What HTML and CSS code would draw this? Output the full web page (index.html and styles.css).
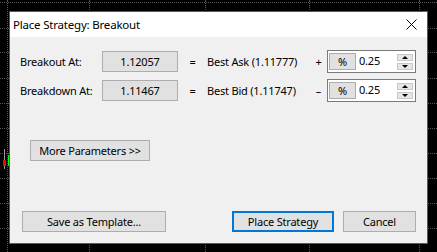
FILE: index.html
```html
<!DOCTYPE html>
<html lang="en">
<head>
    <meta charset="UTF-8">
    <meta name="viewport" content="width=device-width, initial-scale=1.0">
    <title>Place Strategy: Breakout</title>
    <link rel="stylesheet" href="styles.css">
</head>
<body>
    <!-- chart behind the dialog -->
    <div class="chart">
        <div class="hline" style="top:2px"></div>
        <div class="hline" style="top:28px"></div>
        <div class="hline" style="top:52px"></div>
        <div class="hline" style="top:78px"></div>
        <div class="hline" style="top:103px"></div>
        <div class="hline" style="top:128px"></div>
        <div class="hline" style="top:153px"></div>
        <div class="hline" style="top:178px"></div>
        <div class="hline" style="top:203px"></div>
        <div class="hline" style="top:228px"></div>
        <div class="vline" style="left:7px"></div>
        <div class="vline" style="left:89px"></div>
        <div class="vline" style="left:205px"></div>
        <div class="vline" style="left:309px"></div>
        <div class="vline" style="left:419px"></div>
        <div class="wick"></div>
        <div class="candle-red"></div>
        <div class="candle-green"></div>
    </div>

    <div class="dialog">
        <div class="titlebar">
            <span class="title">Place Strategy: Breakout</span>
            <svg class="close" width="11" height="11" viewBox="0 0 11 11">
                <path d="M0.5 0.5 L10.5 10.5 M10.5 0.5 L0.5 10.5" stroke="#000" stroke-width="1"/>
            </svg>
        </div>
        <div class="content">
            <div class="rows">
                <span class="label">Breakout At:</span>
                <span class="value">1.12057</span>
                <span class="eq">=</span>
                <span class="best">Best Ask (1.11777)</span>
                <span class="sign">+</span>
                <div class="spin">
                    <span class="pct">%</span>
                    <span class="num">0.25</span>
                    <div class="arrows">
                        <span class="arrow"><i class="up"></i></span>
                        <span class="arrow"><i class="down"></i></span>
                    </div>
                </div>

                <span class="label">Breakdown At:</span>
                <span class="value">1.11467</span>
                <span class="eq">=</span>
                <span class="best">Best Bid (1.11747)</span>
                <span class="sign">&ndash;</span>
                <div class="spin">
                    <span class="pct">%</span>
                    <span class="num">0.25</span>
                    <div class="arrows">
                        <span class="arrow"><i class="up"></i></span>
                        <span class="arrow"><i class="down"></i></span>
                    </div>
                </div>
            </div>

            <button class="btn more">More Parameters &gt;&gt;</button>

            <div class="footer">
                <button class="btn save">Save as Template...</button>
                <button class="btn place">Place Strategy</button>
                <button class="btn cancel">Cancel</button>
            </div>
        </div>
    </div>
</body>
</html>
```

FILE: styles.css
```css
body{
    margin: 0;
    width: 437px;
    height: 252px;
    background-color: #000;
    font-family: "Noto Sans", "Liberation Sans", sans-serif;
    font-size: 11px;
    letter-spacing: -0.2px;
    color: #000;
    position: relative;
    overflow: hidden;
}

/* chart */
.chart{
    position: absolute;
    left: 0;
    top: 0;
    width: 437px;
    height: 252px;
}
.hline{
    position: absolute;
    left: 0;
    width: 437px;
    border-top: 1px dotted #555;
}
.vline{
    position: absolute;
    top: 0;
    height: 252px;
    border-left: 1px dotted #555;
}
.wick{
    position: absolute;
    left: 4px;
    top: 149px;
    width: 1px;
    height: 20px;
    background-color: #9a9a9a;
}
.candle-red{
    position: absolute;
    left: 3px;
    top: 160px;
    width: 3px;
    height: 6px;
    background-color: #f00;
}
.candle-green{
    position: absolute;
    left: 8px;
    top: 155px;
    width: 1px;
    height: 11px;
    background-color: #0f0;
}

/* dialog */
.dialog{
    position: relative;
    margin: 11px 0 0 9px;
    width: 417px;
    height: 231px;
    border: 1px solid #5a5a5a;
    background-color: #f0f0f0;
    display: flex;
    flex-direction: column;
}
.titlebar{
    height: 25px;
    background-color: #fff;
    display: flex;
    align-items: center;
    justify-content: space-between;
    padding: 0 10px 0 3px;
}
.title{
    font-size: 11.5px;
}
.close{
    display: block;
}

.content{
    flex: 1;
    display: flex;
    flex-direction: column;
    align-items: flex-start;
    padding: 13px 11px 11px 10px;
}
.rows{
    display: grid;
    grid-template-columns: 82px 76px 29px 105px 15px 89px;
    grid-auto-rows: 23px;
    row-gap: 6px;
    align-items: center;
}
.value{
    height: 19px;
    line-height: 19px;
    background-color: #e1e1e1;
    border: 1px solid #adadad;
    text-align: center;
}
.eq{
    text-align: center;
}
.sign{
    text-align: center;
    padding-right: 2px;
}
.spin{
    height: 21px;
    border: 1px solid #7a7a7a;
    background-color: #fff;
    display: flex;
    align-items: center;
    padding: 0 2px 0 1px;
}
.pct{
    width: 25px;
    height: 15px;
    line-height: 15px;
    text-align: center;
    background-color: #e1e1e1;
    border: 1px solid #adadad;
}
.num{
    margin-left: 3px;
    margin-top: -3px;
    flex: 1;
}
.arrows{
    display: flex;
    flex-direction: column;
    gap: 2px;
}
.arrow{
    width: 14px;
    height: 5px;
    border: 1px solid #c8c8c8;
    background-color: #e6e6e6;
    display: flex;
    align-items: center;
    justify-content: center;
}
.up{
    border-left: 3px solid transparent;
    border-right: 3px solid transparent;
    border-bottom: 3px solid #000;
}
.down{
    border-left: 3px solid transparent;
    border-right: 3px solid transparent;
    border-top: 3px solid #000;
}

.btn{
    font-family: inherit;
    font-size: 11px;
    letter-spacing: -0.2px;
    color: #000;
    height: 21px;
    padding: 0;
    background-color: #e1e1e1;
    border: 1px solid #adadad;
    border-radius: 0;
}
.more{
    width: 120px;
    margin: 38px 0 0 10px;
}
.footer{
    margin-top: auto;
    width: 100%;
    display: flex;
    padding-left: 2px;
    box-sizing: border-box;
}
.save{
    width: 144px;
}
.place{
    width: 102px;
    margin-left: auto;
    border: 2px solid #0078d7;
}
.cancel{
    width: 73px;
    margin-left: 9px;
}
```
